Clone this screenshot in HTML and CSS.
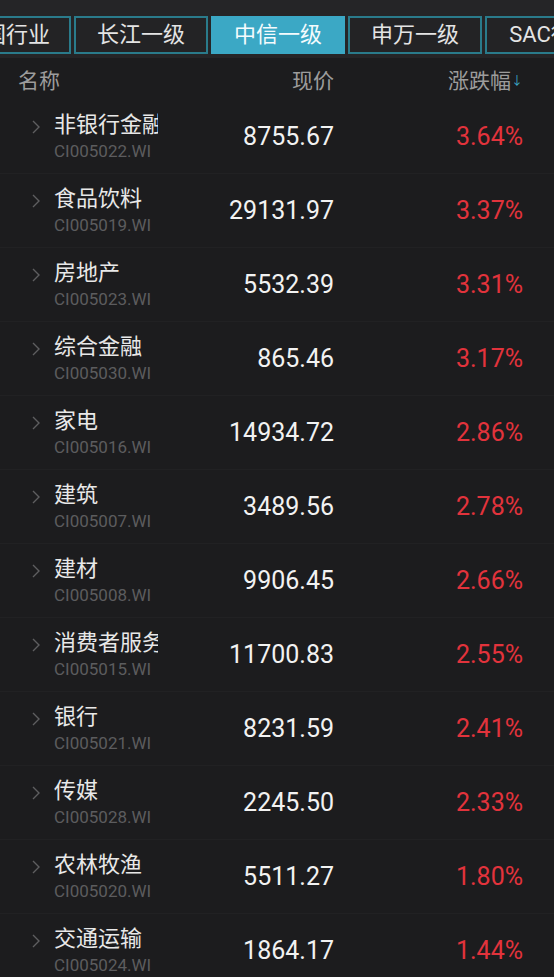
FILE: index.html
```html
<!DOCTYPE html>
<html lang="zh-CN">
  <head>
    <meta charset="utf-8" />
    <meta name="viewport" content="width=device-width, initial-scale=1" />
    <title>行业排行</title>
    <link rel="stylesheet" href="styles.css">
  </head>
  <body>
    <div id="tabs">
      <div class="tab first">中国行业</div>
      <div class="tab">长江一级</div>
      <div class="tab active">中信一级</div>
      <div class="tab">申万一级</div>
      <div class="tab">SAC行业</div>
    </div>

    <div class="head">
      <div class="head-name">名称</div>
      <div class="price">现价</div>
      <div class="pct">涨跌幅<span class="sort">↓</span></div>
    </div>

    <div id="list">
      <div class="row">
        <div class="chev"><svg width="8" height="14" viewBox="0 0 8 14"><polyline points="1,1 7,7 1,13" /></svg></div>
        <div class="name-cell"><div class="name">非银行金融</div><div class="code">CI005022.WI</div></div>
        <div class="price">8755.67</div>
        <div class="pct up">3.64%</div>
      </div>
      <div class="row">
        <div class="chev"><svg width="8" height="14" viewBox="0 0 8 14"><polyline points="1,1 7,7 1,13" /></svg></div>
        <div class="name-cell"><div class="name">食品饮料</div><div class="code">CI005019.WI</div></div>
        <div class="price">29131.97</div>
        <div class="pct up">3.37%</div>
      </div>
      <div class="row">
        <div class="chev"><svg width="8" height="14" viewBox="0 0 8 14"><polyline points="1,1 7,7 1,13" /></svg></div>
        <div class="name-cell"><div class="name">房地产</div><div class="code">CI005023.WI</div></div>
        <div class="price">5532.39</div>
        <div class="pct up">3.31%</div>
      </div>
      <div class="row">
        <div class="chev"><svg width="8" height="14" viewBox="0 0 8 14"><polyline points="1,1 7,7 1,13" /></svg></div>
        <div class="name-cell"><div class="name">综合金融</div><div class="code">CI005030.WI</div></div>
        <div class="price">865.46</div>
        <div class="pct up">3.17%</div>
      </div>
      <div class="row">
        <div class="chev"><svg width="8" height="14" viewBox="0 0 8 14"><polyline points="1,1 7,7 1,13" /></svg></div>
        <div class="name-cell"><div class="name">家电</div><div class="code">CI005016.WI</div></div>
        <div class="price">14934.72</div>
        <div class="pct up">2.86%</div>
      </div>
      <div class="row">
        <div class="chev"><svg width="8" height="14" viewBox="0 0 8 14"><polyline points="1,1 7,7 1,13" /></svg></div>
        <div class="name-cell"><div class="name">建筑</div><div class="code">CI005007.WI</div></div>
        <div class="price">3489.56</div>
        <div class="pct up">2.78%</div>
      </div>
      <div class="row">
        <div class="chev"><svg width="8" height="14" viewBox="0 0 8 14"><polyline points="1,1 7,7 1,13" /></svg></div>
        <div class="name-cell"><div class="name">建材</div><div class="code">CI005008.WI</div></div>
        <div class="price">9906.45</div>
        <div class="pct up">2.66%</div>
      </div>
      <div class="row">
        <div class="chev"><svg width="8" height="14" viewBox="0 0 8 14"><polyline points="1,1 7,7 1,13" /></svg></div>
        <div class="name-cell"><div class="name">消费者服务</div><div class="code">CI005015.WI</div></div>
        <div class="price">11700.83</div>
        <div class="pct up">2.55%</div>
      </div>
      <div class="row">
        <div class="chev"><svg width="8" height="14" viewBox="0 0 8 14"><polyline points="1,1 7,7 1,13" /></svg></div>
        <div class="name-cell"><div class="name">银行</div><div class="code">CI005021.WI</div></div>
        <div class="price">8231.59</div>
        <div class="pct up">2.41%</div>
      </div>
      <div class="row">
        <div class="chev"><svg width="8" height="14" viewBox="0 0 8 14"><polyline points="1,1 7,7 1,13" /></svg></div>
        <div class="name-cell"><div class="name">传媒</div><div class="code">CI005028.WI</div></div>
        <div class="price">2245.50</div>
        <div class="pct up">2.33%</div>
      </div>
      <div class="row">
        <div class="chev"><svg width="8" height="14" viewBox="0 0 8 14"><polyline points="1,1 7,7 1,13" /></svg></div>
        <div class="name-cell"><div class="name">农林牧渔</div><div class="code">CI005020.WI</div></div>
        <div class="price">5511.27</div>
        <div class="pct up">1.80%</div>
      </div>
      <div class="row">
        <div class="chev"><svg width="8" height="14" viewBox="0 0 8 14"><polyline points="1,1 7,7 1,13" /></svg></div>
        <div class="name-cell"><div class="name">交通运输</div><div class="code">CI005024.WI</div></div>
        <div class="price">1864.17</div>
        <div class="pct up">1.44%</div>
      </div>
    </div>
  </body>
</html>
```

FILE: styles.css
```css
html,
body {
  height: 100%;
}

body {
  margin: 0;
  padding: 0;
  overflow: hidden;
  background: #1c1c1e;
  font-family: Roboto, "Noto Sans CJK SC", sans-serif;
}

#tabs {
  display: flex;
  gap: 3px;
  height: 58px;
  box-sizing: border-box;
  padding-top: 16px;
  background: #252527;
  overflow: hidden;
}

.tab {
  flex: 0 0 134px;
  height: 38px;
  box-sizing: border-box;
  border: 2px solid #2a7b8b;
  background: #232325;
  color: #e4e4e4;
  font-size: 22px;
  line-height: 34px;
  text-align: center;
  white-space: nowrap;
}

.tab.first {
  margin-left: -63px;
  text-align: right;
  padding-right: 19px;
}

.tab.active {
  background: #3ba8c5;
  border-color: #3ba8c5;
  color: #f4fbfd;
}

.head {
  display: flex;
  align-items: center;
  height: 42px;
  color: #9c9c9c;
  font-size: 21px;
}

.head-name {
  width: 158px;
  box-sizing: border-box;
  padding-left: 18px;
}

.head .price,
.head .pct {
  font-size: 21px;
  color: #9c9c9c;
}

.head .pct {
  margin-right: 31px;
}

.sort {
  color: #3ba8c5;
  font-size: 12px;
  margin-left: 0;
  vertical-align: 3px;
}

.row {
  display: flex;
  align-items: center;
  height: 74px;
  box-sizing: border-box;
  border-bottom: 1px solid #212123;
}

.chev {
  width: 54px;
  align-self: flex-start;
  box-sizing: border-box;
  padding: 20px 0 0 32px;
}

.chev svg {
  display: block;
}

.chev polyline {
  fill: none;
  stroke: #5e5e60;
  stroke-width: 1.4;
}

.name-cell {
  width: 104px;
  align-self: flex-start;
  padding-top: 11px;
  overflow: hidden;
  white-space: nowrap;
}

.name {
  color: #e8e8e8;
  font-size: 22px;
  line-height: 28px;
}

.code {
  color: #5c5c5e;
  font-size: 17px;
  line-height: 24px;
}

.price {
  flex: 1;
  text-align: right;
  color: #f2f2f2;
  font-size: 25px;
}

.pct {
  width: 189px;
  margin-right: 31px;
  text-align: right;
  font-size: 25px;
}

.pct.up {
  color: #e2333c;
}
```
